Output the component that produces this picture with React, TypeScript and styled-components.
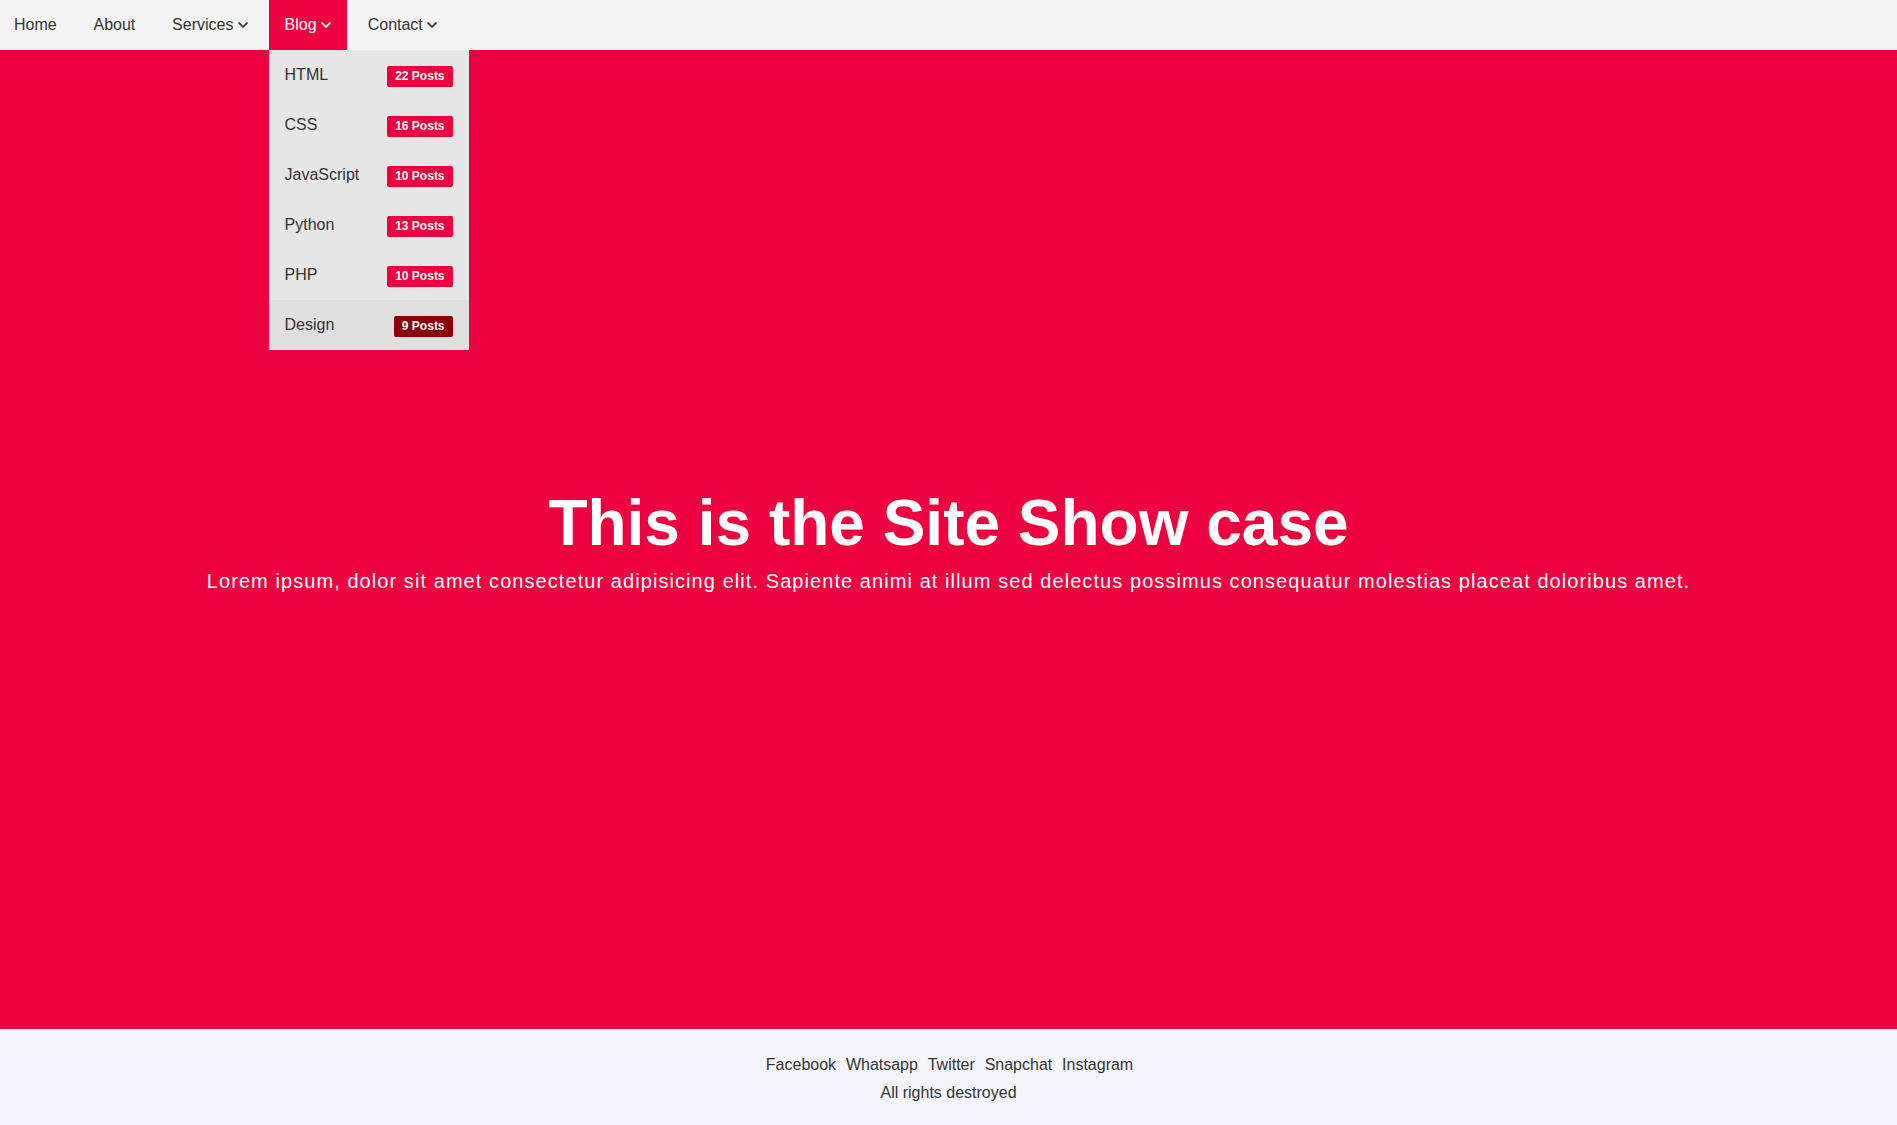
import React from "react";
import styled, { createGlobalStyle } from "styled-components";

const GlobalStyle = createGlobalStyle`
  * { box-sizing: border-box; }
  html, body { margin: 0; padding: 0; }
  body {
    font-family: "Liberation Sans", Arial, sans-serif;
    color: #333;
  }
`;

const RED = "#ec0040";

const Page = styled.div`
  display: flex;
  flex-direction: column;
  min-height: 1125px;
`;

const NavBar = styled.nav`
  height: 50px;
  background: #f4f4f4;
  display: flex;
  align-items: stretch;
`;

const NavList = styled.ul`
  list-style: none;
  margin: 0 0 0 -2px;
  padding: 0;
  display: flex;
  gap: 4.8px;
`;

const NavItem = styled.li<{ $active?: boolean }>`
  position: relative;
  display: flex;
  align-items: center;
  padding: 0 16px;
  font-size: 16px;
  color: ${(p) => (p.$active ? "#fff" : "#333")};
  background: ${(p) => (p.$active ? RED : "transparent")};
  cursor: pointer;
`;

const Chevron = styled.svg`
  width: 10px;
  height: 12px;
  margin-left: 4.3px;
  fill: currentColor;
`;

const Dropdown = styled.ul`
  position: absolute;
  top: 50px;
  left: 0;
  width: 200px;
  margin: 0;
  padding: 0;
  list-style: none;
  background: #e6e6e6;
  z-index: 10;
`;

const DropRow = styled.li<{ $hover?: boolean }>`
  height: 50px;
  padding: 0 16px;
  display: flex;
  align-items: center;
  justify-content: space-between;
  font-size: 16px;
  color: #333;
  background: ${(p) => (p.$hover ? "#dfdfdf" : "transparent")};
`;

const Badge = styled.span<{ $dark?: boolean }>`
  display: inline-block;
  height: 21px;
  line-height: 21px;
  padding: 0 8px;
  margin-top: 3px;
  font-size: 12px;
  font-weight: bold;
  color: #fff;
  border-radius: 2px;
  background: ${(p) => (p.$dark ? "#8b0000" : RED)};
`;

const Hero = styled.main`
  flex: 1;
  background: ${RED};
  display: flex;
  flex-direction: column;
  align-items: center;
  justify-content: center;
  gap: 10px;
  color: #fff;
  text-align: center;
`;

const Title = styled.h1`
  margin: 0;
  font-size: 64px;
  font-weight: bold;
  line-height: normal;
`;

const Lead = styled.p`
  margin: 0;
  font-size: 20px;
  letter-spacing: 1.07px;
  line-height: normal;
`;

const Footer = styled.footer`
  height: 96px;
  background: #f5f5fd;
  padding-top: 27px;
  display: flex;
  flex-direction: column;
  align-items: center;
  gap: 9.5px;
  font-size: 16px;
  color: #333;
`;

const Social = styled.div`
  display: flex;
  gap: 9.8px;
  padding-left: 2px;
`;

const SocialLink = styled.a`
  color: #333;
  text-decoration: none;
`;

const Copy = styled.div``;

const ChevronDown = () => (
  <Chevron viewBox="0 0 448 512" aria-hidden="true">
    <path d="M207.029 381.476L12.686 187.132c-9.373-9.373-9.373-24.569 0-33.941l22.667-22.667c9.357-9.357 24.522-9.375 33.901-.04L224 284.505l154.745-154.021c9.379-9.335 24.544-9.317 33.901.04l22.667 22.667c9.373 9.373 9.373 24.569 0 33.941L240.971 381.476c-9.373 9.372-24.569 9.372-33.942 0z" />
  </Chevron>
);

const blogItems = [
  { name: "HTML", posts: "22 Posts" },
  { name: "CSS", posts: "16 Posts" },
  { name: "JavaScript", posts: "10 Posts" },
  { name: "Python", posts: "13 Posts" },
  { name: "PHP", posts: "10 Posts" },
  { name: "Design", posts: "9 Posts", hover: true },
];

export default function App() {
  return (
    <>
      <GlobalStyle />
      <Page>
        <NavBar>
          <NavList>
            <NavItem>Home</NavItem>
            <NavItem>About</NavItem>
            <NavItem>
              Services
              <ChevronDown />
            </NavItem>
            <NavItem $active>
              Blog
              <ChevronDown />
              <Dropdown>
                {blogItems.map((b) => (
                  <DropRow key={b.name} $hover={b.hover}>
                    <span>{b.name}</span>
                    <Badge $dark={b.hover}>{b.posts}</Badge>
                  </DropRow>
                ))}
              </Dropdown>
            </NavItem>
            <NavItem>
              Contact
              <ChevronDown />
            </NavItem>
          </NavList>
        </NavBar>
        <Hero>
          <Title>This is the Site Show case</Title>
          <Lead>
            Lorem ipsum, dolor sit amet consectetur adipisicing elit. Sapiente animi at illum sed delectus possimus
            consequatur molestias placeat doloribus amet.
          </Lead>
        </Hero>
        <Footer>
          <Social>
            <SocialLink href="#">Facebook</SocialLink>
            <SocialLink href="#">Whatsapp</SocialLink>
            <SocialLink href="#">Twitter</SocialLink>
            <SocialLink href="#">Snapchat</SocialLink>
            <SocialLink href="#">Instagram</SocialLink>
          </Social>
          <Copy>All rights destroyed</Copy>
        </Footer>
      </Page>
    </>
  );
}
